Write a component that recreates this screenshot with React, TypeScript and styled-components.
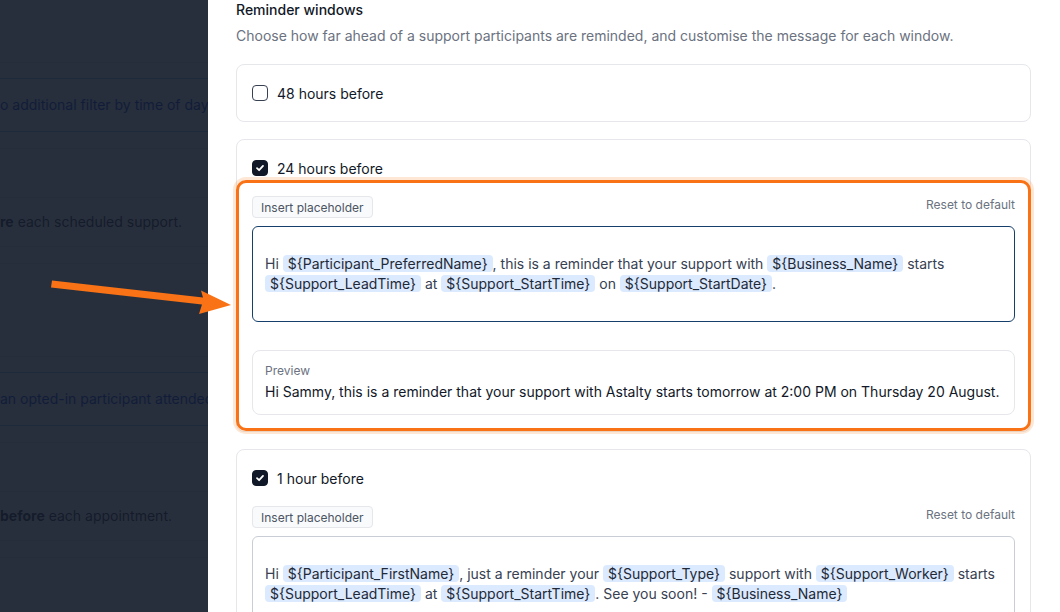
import React from 'react';
import styled, { createGlobalStyle } from 'styled-components';

const GlobalStyle = createGlobalStyle`
  html, body {
    margin: 0;
    height: 100%;
    overflow: hidden;
  }
  body {
    font-family: Inter, "Noto Sans", sans-serif;
    background: #ffffff;
    color: #111827;
    -webkit-font-smoothing: antialiased;
  }
`;

/* ---------- page behind the drawer ---------- */

const Page = styled.div`
  display: flex;
  flex-direction: column;
  font-size: 14px;
  line-height: 20px;
  color: #374151;
`;

const Section = styled.section`
  display: flex;
  flex-direction: column;
  height: 294px;
`;

const SectionHead = styled.div`
  height: 62px;
  border-bottom: 1px solid #e5e7eb;
`;

const Callout = styled.div`
  margin-top: 15px;
  height: 52px;
  display: flex;
  align-items: center;
  background: #eff6ff;
  border-top: 1px solid #93c5fd;
  border-bottom: 1px solid #93c5fd;
  color: #1d4ed8;
  white-space: nowrap;
`;

const Divider = styled.div<{ $gap: number }>`
  margin-top: ${(p) => p.$gap}px;
  border-top: 1px solid #e5e7eb;
`;

const SettingRow = styled.div`
  margin-top: 48px;
  height: 48px;
  display: flex;
  align-items: center;
  border-top: 1px solid #e5e7eb;
  border-bottom: 1px solid #e5e7eb;
  white-space: nowrap;
`;

/* text whose start is scrolled off the left edge */
const Lead = styled.span`
  display: inline-flex;
  width: 0;
  justify-content: flex-end;
`;

const Backdrop = styled.div`
  position: fixed;
  inset: 0;
  background: rgba(17, 24, 39, 0.9);
`;

/* ---------- drawer ---------- */

const Drawer = styled.aside`
  position: fixed;
  top: 0;
  right: 0;
  bottom: 0;
  width: 852px;
  background: #ffffff;
  box-sizing: border-box;
  padding: 0 29px 0 28px;
  display: flex;
  flex-direction: column;
  overflow: hidden;
`;

const Title = styled.h3`
  margin: 0;
  font-size: 14px;
  line-height: 20px;
  font-weight: 500;
  color: #111827;
`;

const Subtitle = styled.p`
  margin: 6px 0 0;
  font-size: 14px;
  line-height: 20px;
  color: #6b7280;
`;

const WindowList = styled.div`
  margin-top: 18px;
  display: flex;
  flex-direction: column;
  gap: 17px;
`;

const WindowCard = styled.div`
  border: 1px solid #e5e7eb;
  border-radius: 8px;
  padding: 18px 15px;
  display: flex;
  flex-direction: column;

  &:has(> div) {
    padding-bottom: 16px;
  }
`;

const CheckRow = styled.label`
  display: flex;
  align-items: center;
  gap: 9px;
  height: 20px;
  font-size: 14px;
  color: #111827;
`;

const Box = styled.span<{ $on: boolean }>`
  width: 16px;
  height: 16px;
  box-sizing: border-box;
  border-radius: 4px;
  border: 1px solid ${(p) => (p.$on ? '#111827' : '#374151')};
  background: ${(p) => (p.$on ? '#111827' : '#ffffff')};
  display: flex;
  align-items: center;
  justify-content: center;
`;

const Editor = styled.div<{ $hot?: boolean }>`
  position: relative;
  margin-top: 18px;
  display: flex;
  flex-direction: column;

  ${(p) =>
    p.$hot &&
    `
    &::after {
      content: '';
      position: absolute;
      inset: -16px;
      border: 3px solid #f97316;
      border-radius: 10px;
      box-shadow: 0 0 0 3px rgba(251, 146, 60, 0.22);
      pointer-events: none;
    }
  `}
`;

const Toolbar = styled.div`
  display: flex;
  justify-content: space-between;
  align-items: flex-start;
`;

const SmallButton = styled.button`
  height: 22px;
  padding: 0 8px;
  font-family: inherit;
  font-size: 12px;
  color: #4b5563;
  background: #f9fafb;
  border: 1px solid #e5e7eb;
  border-radius: 4px;
`;

const TextLink = styled.span`
  font-size: 12px;
  line-height: 16px;
  margin-top: 1px;
  color: #6b7280;
`;

const Template = styled.div<{ $focus?: boolean }>`
  margin-top: 8px;
  padding: 27px 12px;
  border: 1px solid ${(p) => (p.$focus ? '#173f6b' : '#c9ced6')};
  border-radius: 6px;
  font-size: 14px;
  line-height: 20px;
  color: #374151;
`;

const Chip = styled.span`
  background: #dbeafe;
  color: #1f2937;
  border-radius: 4px;
  padding: 0 5px;
`;

const Preview = styled.div`
  margin-top: 28px;
  padding: 12px;
  border: 1px solid #e5e7eb;
  border-radius: 8px;
`;

const PreviewLabel = styled.div`
  font-size: 12px;
  line-height: 16px;
  color: #6b7280;
`;

const PreviewText = styled.div`
  margin-top: 3px;
  font-size: 14px;
  line-height: 20px;
  color: #111827;
`;

const Arrow = styled.svg`
  position: fixed;
  left: 0;
  top: 0;
  pointer-events: none;
`;

function Checkbox({ on }: { on: boolean }) {
  return (
    <Box $on={on}>
      {on && (
        <svg width="10" height="10" viewBox="0 0 10 10">
          <path d="M2 5.2 L4.1 7.2 L8 2.9" fill="none" stroke="#fff" strokeWidth="1.8" strokeLinecap="round" strokeLinejoin="round" />
        </svg>
      )}
    </Box>
  );
}

function BackgroundSection({ callout, row }: { callout: React.ReactNode; row: React.ReactNode }) {
  return (
    <Section>
      <SectionHead />
      <Callout>{callout}</Callout>
      <Divider $gap={16} />
      <SettingRow>{row}</SettingRow>
      <Divider $gap={16} />
    </Section>
  );
}

export default function App() {
  return (
    <>
      <GlobalStyle />
      <Page>
        <BackgroundSection
          callout={
            <>
              <Lead>Reminders are sent with n</Lead>o additional filter by time of day.
            </>
          }
          row={
            <>
              <Lead>
                <span>
                  Participants receive an SMS reminder <b>befo</b>
                </span>
              </Lead>
              <b>re</b>&nbsp;each scheduled support.
            </>
          }
        />
        <BackgroundSection
          callout={
            <>
              <Lead>Send a thank-you message when </Lead>an opted-in participant attended a support.
            </>
          }
          row={
            <>
              <Lead>Workers are reminded </Lead>
              <b>before</b>&nbsp;each appointment.
            </>
          }
        />
      </Page>
      <Backdrop />

      <Drawer>
        <Title>Reminder windows</Title>
        <Subtitle>
          Choose how far ahead of a support participants are reminded, and customise the message for each window.
        </Subtitle>

        <WindowList>
          <WindowCard>
            <CheckRow>
              <Checkbox on={false} />
              48 hours before
            </CheckRow>
          </WindowCard>

          <WindowCard>
            <CheckRow>
              <Checkbox on />
              24 hours before
            </CheckRow>
            <Editor $hot>
              <Toolbar>
                <SmallButton>Insert placeholder</SmallButton>
                <TextLink>Reset to default</TextLink>
              </Toolbar>
              <Template $focus>
                Hi <Chip>{'${Participant_PreferredName}'}</Chip>, this is a reminder that your support with{' '}
                <Chip>{'${Business_Name}'}</Chip> starts
                <br />
                <Chip>{'${Support_LeadTime}'}</Chip> at <Chip>{'${Support_StartTime}'}</Chip> on{' '}
                <Chip>{'${Support_StartDate}'}</Chip>.
              </Template>
              <Preview>
                <PreviewLabel>Preview</PreviewLabel>
                <PreviewText>
                  Hi Sammy, this is a reminder that your support with Astalty starts tomorrow at 2:00 PM on Thursday 20
                  August.
                </PreviewText>
              </Preview>
            </Editor>
          </WindowCard>

          <WindowCard>
            <CheckRow>
              <Checkbox on />
              1 hour before
            </CheckRow>
            <Editor>
              <Toolbar>
                <SmallButton>Insert placeholder</SmallButton>
                <TextLink>Reset to default</TextLink>
              </Toolbar>
              <Template>
                Hi <Chip>{'${Participant_FirstName}'}</Chip>, just a reminder your <Chip>{'${Support_Type}'}</Chip>{' '}
                support with <Chip>{'${Support_Worker}'}</Chip> starts
                <br />
                <Chip>{'${Support_LeadTime}'}</Chip> at <Chip>{'${Support_StartTime}'}</Chip>. See you soon! -{' '}
                <Chip>{'${Business_Name}'}</Chip>
              </Template>
            </Editor>
          </WindowCard>
        </WindowList>
      </Drawer>

      <Arrow width="240" height="320" viewBox="0 0 240 320">
        <path d="M52 280.5 L203 297.5 L201 290.5 L231 305 L199 314 L202 304.5 L51 287.5 Z" fill="#f97316" />
      </Arrow>
    </>
  );
}
